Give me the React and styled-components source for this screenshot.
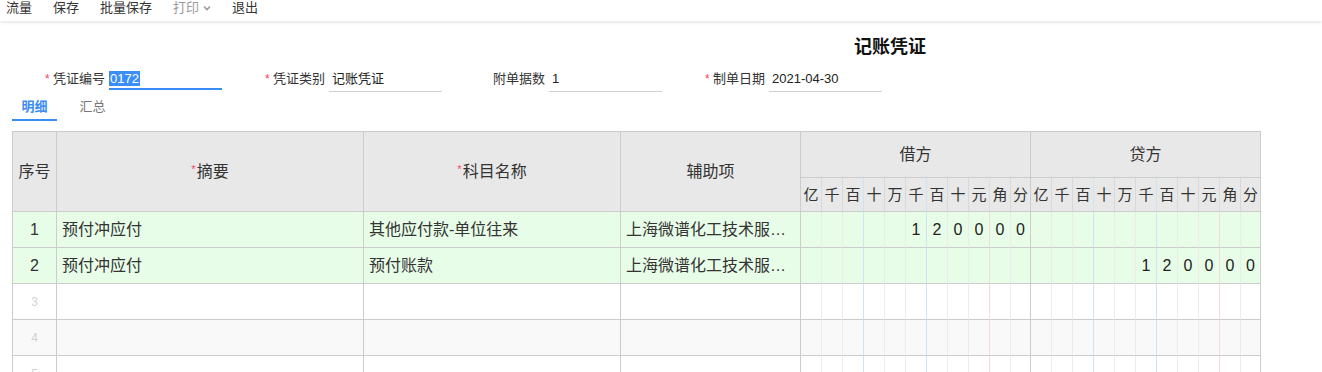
import React from "react";
import styled, { createGlobalStyle } from "styled-components";

const Global = createGlobalStyle`
  html, body { margin: 0; padding: 0; background: #fff; overflow: hidden; }
  body { font-family: "Liberation Sans", "Noto Sans CJK SC", sans-serif; color: #333; }
`;

const Toolbar = styled.div`
  height: 21px;
  display: flex;
  align-items: flex-start;
  gap: 21px;
  padding-left: 6px;
  box-shadow: 0 1px 4px rgba(0, 0, 0, 0.13);
`;

const ToolItem = styled.span`
  font-size: 13px;
  line-height: 16px;
  color: ${(p) => (p.$disabled ? "#9a9a9a" : "#333")};
  display: inline-flex;
  align-items: center;
  gap: 4px;
  cursor: pointer;
`;

const Title = styled.div`
  margin-top: 14px;
  padding-left: 854px;
  font-size: 18px;
  font-weight: bold;
  line-height: 24px;
  color: #111;
`;

const FormRow = styled.div`
  margin-top: 9px;
  padding-left: 45px;
  display: flex;
`;

const Field = styled.div`
  width: 220px;
  height: 24px;
  display: flex;
  align-items: flex-start;
`;

const Star = styled.span`
  width: 8px;
  font-size: 12px;
  line-height: 22px;
  color: #f5455c;
`;

const Label = styled.span`
  font-size: 13px;
  line-height: 22px;
  margin-right: 4px;
  color: #333;
`;

const Input = styled.div`
  width: 113px;
  box-sizing: border-box;
  height: ${(p) => (p.$focused ? "22px" : "24px")};
  border-bottom: ${(p) => (p.$focused ? "2px solid #3b8cf5" : "1px solid #cfcfcf")};
  padding-left: ${(p) => (p.$focused ? "0" : "3px")};
  font-size: 13px;
  line-height: 22px;
  color: #222;
`;

const Selected = styled.span`
  background: #3a8ef6;
  color: #fff;
  padding: 0 1px;
`;

const Tabs = styled.div`
  margin-top: 3px;
  padding-left: 12px;
  display: flex;
  gap: 13px;
`;

const Tab = styled.div`
  width: 45px;
  height: 24px;
  box-sizing: content-box;
  text-align: center;
  font-size: 13px;
  line-height: 24px;
  font-weight: ${(p) => (p.$active ? "bold" : "normal")};
  color: ${(p) => (p.$active ? "#3b8cf5" : "#777")};
  border-bottom: 2px solid ${(p) => (p.$active ? "#3b8cf5" : "transparent")};
`;

const Grid = styled.div`
  margin: 10px 0 0 12px;
  display: inline-grid;
  grid-template-columns: 44px 307px 257px 180px repeat(10, 21px) 20px repeat(10, 21px) 20px;
  grid-template-rows: 46px 34px;
  grid-auto-rows: 36px;
  border-top: 1px solid #ccc;
  border-left: 1px solid #ccc;
`;

const Cell = styled.div`
  box-sizing: border-box;
  border-right: 1px solid ${(p) => p.$rc || "#ccc"};
  border-bottom: 1px solid #ccc;
  background: ${(p) => p.$bg || "#fff"};
  display: flex;
  align-items: center;
  justify-content: ${(p) => (p.$left ? "flex-start" : "center")};
  padding: ${(p) => (p.$left ? "0 5px" : "0")};
  font-size: 16px;
  line-height: 20px;
  color: #333;
  min-width: 0;
  overflow: hidden;
`;

const HeadCell = styled(Cell)`
  background: #e8e8e8;
  grid-row: ${(p) => (p.$tall ? "span 2" : "auto")};
  grid-column: ${(p) => (p.$span ? `span ${p.$span}` : "auto")};
`;

const SubHead = styled(Cell)`
  background: #e8e8e8;
  font-size: 15px;
`;

const Req = styled.span`
  color: #f5455c;
  font-size: 11px;
  line-height: 12px;
  margin-right: 1px;
  margin-bottom: 5px;
`;

const Ellipsis = styled.span`
  white-space: nowrap;
  overflow: hidden;
  text-overflow: ellipsis;
  display: block;
`;

const RowNo = styled.span`
  font-size: ${(p) => (p.$faint ? "12px" : "16px")};
  color: ${(p) => (p.$faint ? "#d2d2d2" : "#333")};
`;

const Digit = styled.span`
  font-size: 16px;
  color: #222;
`;

const UNITS = ["亿", "千", "百", "十", "万", "千", "百", "十", "元", "角", "分"];

const lineColor = (i, head) => {
  if (i === 10) return "#ccc";
  if (i === 2 || i === 5) return head ? "#cfe3f2" : "#cde4f5";
  if (i === 8) return head ? "#ddd" : "#f2d9de";
  return head ? "#d8d8d8" : "#ebebeb";
};

const rows = [
  { no: 1, summary: "预付冲应付", subject: "其他应付款-单位往来", aux: "上海微谱化工技术服务有限公司", debit: "120000", credit: "" },
  { no: 2, summary: "预付冲应付", subject: "预付账款", aux: "上海微谱化工技术服务有限公司", debit: "", credit: "120000" },
  { no: 3 },
  { no: 4 },
  { no: 5 },
];

const digitsOf = (s) => (s || "").padStart(11, " ").split("");

const ChevronDown = () => (
  <svg width="8" height="6" viewBox="0 0 8 6" fill="none">
    <path d="M1 1.5 L4 4.5 L7 1.5" stroke="#9a9a9a" strokeWidth="1.6" />
  </svg>
);

export default function App() {
  return (
    <>
      <Global />
      <Toolbar>
        <ToolItem>流量</ToolItem>
        <ToolItem>保存</ToolItem>
        <ToolItem>批量保存</ToolItem>
        <ToolItem $disabled>
          打印
          <ChevronDown />
        </ToolItem>
        <ToolItem>退出</ToolItem>
      </Toolbar>

      <Title>记账凭证</Title>

      <FormRow>
        <Field>
          <Star>*</Star>
          <Label>凭证编号</Label>
          <Input $focused>
            <Selected>0172</Selected>
          </Input>
        </Field>
        <Field>
          <Star>*</Star>
          <Label>凭证类别</Label>
          <Input>记账凭证</Input>
        </Field>
        <Field>
          <Star />
          <Label>附单据数</Label>
          <Input>1</Input>
        </Field>
        <Field>
          <Star>*</Star>
          <Label>制单日期</Label>
          <Input>2021-04-30</Input>
        </Field>
      </FormRow>

      <Tabs>
        <Tab $active>明细</Tab>
        <Tab>汇总</Tab>
      </Tabs>

      <Grid>
        <HeadCell $tall>序号</HeadCell>
        <HeadCell $tall>
          <Req>*</Req>摘要
        </HeadCell>
        <HeadCell $tall>
          <Req>*</Req>科目名称
        </HeadCell>
        <HeadCell $tall>辅助项</HeadCell>
        <HeadCell $span={11}>借方</HeadCell>
        <HeadCell $span={11}>贷方</HeadCell>
        {[0, 1].map((g) =>
          UNITS.map((u, i) => (
            <SubHead key={`h${g}-${i}`} $rc={lineColor(i, true)}>
              {u}
            </SubHead>
          ))
        )}

        {rows.map((r, ri) => {
          const bg = r.summary ? "#e8fde8" : ri % 2 === 1 ? "#f9f9f9" : "#fff";
          return (
            <React.Fragment key={r.no}>
              <Cell $bg={bg}>
                <RowNo $faint={!r.summary}>{r.no}</RowNo>
              </Cell>
              <Cell $bg={bg} $left>{r.summary}</Cell>
              <Cell $bg={bg} $left>{r.subject}</Cell>
              <Cell $bg={bg} $left>
                <Ellipsis>{r.aux}</Ellipsis>
              </Cell>
              {[r.debit, r.credit].map((amt, g) =>
                digitsOf(amt).map((d, i) => (
                  <Cell key={`${g}-${i}`} $bg={bg} $rc={lineColor(i, false)}>
                    <Digit>{d.trim()}</Digit>
                  </Cell>
                ))
              )}
            </React.Fragment>
          );
        })}
      </Grid>
    </>
  );
}
